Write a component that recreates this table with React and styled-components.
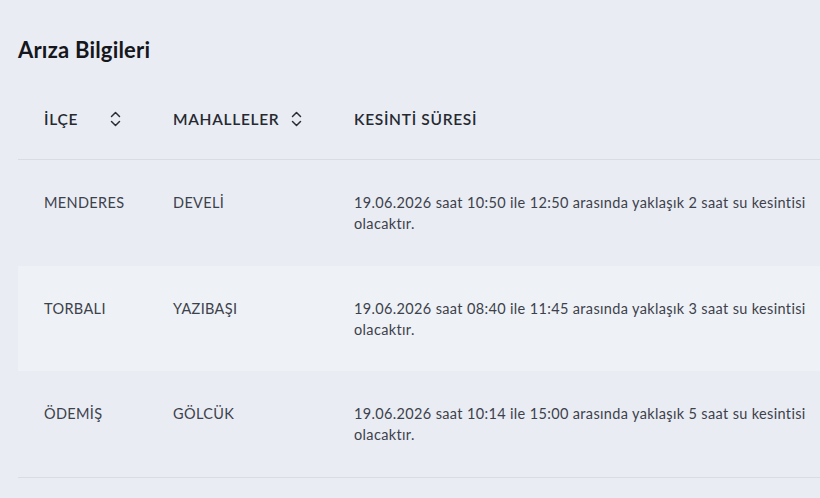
import React from "react";
import styled, { createGlobalStyle } from "styled-components";

const Global = createGlobalStyle`
  html, body { margin: 0; padding: 0; background: #e9ecf3; }
  body { font-family: "Lato", "Open Sans", sans-serif; overflow: hidden; }
`;

const Page = styled.div`
  width: 820px;
  height: 498px;
  overflow: hidden;
  padding: 38px 0 0 18px;
  box-sizing: border-box;
`;

const Title = styled.h2`
  margin: 0;
  font-family: "Lato", "Open Sans", sans-serif;
  font-weight: 700;
  font-size: 22px;
  line-height: 24px;
  color: #15171c;
  letter-spacing: 0.2px;
`;

const Table = styled.table`
  margin-top: 23px;
  width: 840px;
  border-collapse: collapse;
  table-layout: fixed;
`;

const Th = styled.th`
  box-sizing: border-box;
  width: ${(p) => p.$w || "auto"};
  padding: 22px 26px 28px;
  text-align: left;
  font-family: "Lato", "Open Sans", sans-serif;
  font-weight: 600;
  font-size: 15.5px;
  line-height: 24px;
  color: #262930;
  border-bottom: 1px solid #d8dce5;
  letter-spacing: 0.7px;
`;

const HeadInner = styled.div`
  display: flex;
  align-items: center;
  justify-content: space-between;
`;

const Row = styled.tr`
  background: ${(p) => (p.$alt ? "#eef1f6" : "transparent")};
  &:last-child td { border-bottom: 1px solid #d8dce5; }
`;

const Td = styled.td`
  padding: 32px 26px 31.5px;
  vertical-align: top;
  font-family: "Lato", "Open Sans", sans-serif;
  font-size: 14.5px;
  line-height: 21px;
  color: #3d414b;
  letter-spacing: 0.35px;
`;

const SortIcon = () => (
  <svg width="11" height="18" viewBox="0 0 11 18" fill="none" stroke="#2a2d35" strokeWidth="1.5" strokeLinecap="round" strokeLinejoin="round">
    <path d="M1.5 6.5 L5.5 2.5 L9.5 6.5" />
    <path d="M1.5 11.5 L5.5 15.5 L9.5 11.5" />
  </svg>
);

const rows = [
  ["MENDERES", "DEVELİ", "19.06.2026 saat 10:50 ile 12:50 arasında yaklaşık 2 saat su kesintisi olacaktır."],
  ["TORBALI", "YAZIBAŞI", "19.06.2026 saat 08:40 ile 11:45 arasında yaklaşık 3 saat su kesintisi olacaktır."],
  ["ÖDEMİŞ", "GÖLCÜK", "19.06.2026 saat 10:14 ile 15:00 arasında yaklaşık 5 saat su kesintisi olacaktır."],
];

export default function App() {
  return (
    <Page>
      <Global />
      <Title>Arıza Bilgileri</Title>
      <Table>
        <thead>
          <tr>
            <Th $w="129px">
              <HeadInner>İLÇE <SortIcon /></HeadInner>
            </Th>
            <Th $w="181px">
              <HeadInner>MAHALLELER <SortIcon /></HeadInner>
            </Th>
            <Th>KESİNTİ SÜRESİ</Th>
          </tr>
        </thead>
        <tbody>
          {rows.map((r, i) => (
            <Row key={i} $alt={i === 1}>
              <Td>{r[0]}</Td>
              <Td>{r[1]}</Td>
              <Td>{r[2]}</Td>
            </Row>
          ))}
        </tbody>
      </Table>
    </Page>
  );
}
